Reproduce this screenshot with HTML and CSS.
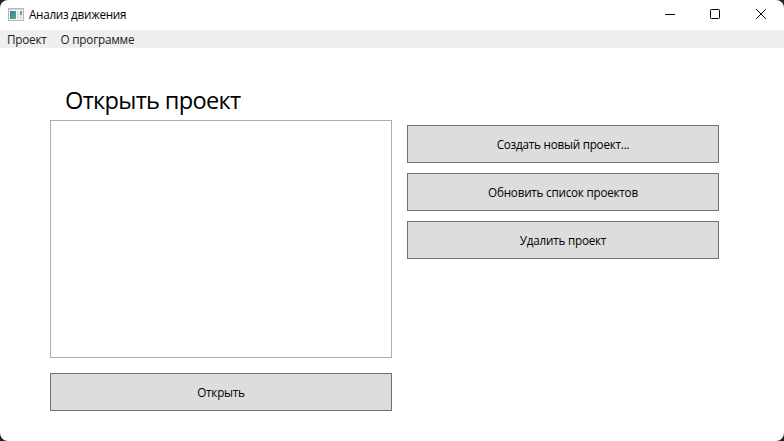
FILE: index.html
```html
<!DOCTYPE html>
<html lang="ru">
<head>
<meta charset="utf-8">
<title>Анализ движения</title>
<link rel="stylesheet" href="styles.css">
</head>
<body>
<div class="window">
  <header class="titlebar">
    <svg class="app-icon" width="16" height="13" viewBox="0 0 16 13">
      <defs>
        <linearGradient id="screen" x1="0" y1="0" x2="1" y2="1">
          <stop offset="0" stop-color="#3c78b4"/>
          <stop offset="1" stop-color="#4fae83"/>
        </linearGradient>
      </defs>
      <rect x=".5" y=".5" width="15" height="12" fill="#f2f3f4" stroke="#b3b7be"/>
      <rect x="1" y="1" width="14" height="1" fill="#d4d7dc"/>
      <rect x="2" y="3" width="6" height="8" fill="url(#screen)"/>
      <rect x="9" y="3" width="2" height="8" fill="#e2e3e5"/>
      <rect x="12" y="3" width="2" height="4" fill="#6ba889"/>
      <rect x="12" y="7" width="2" height="4" fill="#dfe2e2"/>
    </svg>
    <h1 class="title">Анализ движения</h1>
    <div class="controls">
      <svg width="10" height="10" viewBox="0 0 10 10"><path d="M0 5.5H10"/></svg>
      <svg width="10" height="10" viewBox="0 0 10 10"><rect x=".5" y=".5" width="9" height="9" rx=".8"/></svg>
      <svg class="close" width="10" height="10" viewBox="0 0 10 10"><path d="M.2 .2L9.8 9.8M9.8 .2L.2 9.8"/></svg>
    </div>
  </header>
  <nav class="menu"><span class="menu-project">Проект</span><span class="menu-about">О программе</span></nav>
  <main class="content">
    <section class="projects">
      <h2 class="heading">Открыть проект</h2>
      <div class="list"></div>
      <button class="button open">Открыть</button>
    </section>
    <section class="actions">
      <button class="button create">Создать новый проект...</button>
      <button class="button refresh">Обновить список проектов</button>
      <button class="button delete">Удалить проект</button>
    </section>
  </main>
</div>
</body>
</html>
```
FILE: styles.css
```css
* { box-sizing: border-box; }
body {
  margin: 0;
  background: #242021;
  font-family: "Open Sans", "Noto Sans", sans-serif;
  font-size: 11.7px;
  color: #000;
}
.window {
  width: 784px;
  height: 441px;
  background: #fff;
  border-radius: 8px;
  overflow: hidden;
}
.titlebar {
  height: 30px;
  display: flex;
  align-items: center;
  padding: 0 18px 0 8px;
}
.app-icon { margin-top: -2px; }
.title {
  margin: -2px 0 0 5px;
  font-size: 11.7px;
  font-weight: 400;
  line-height: 16px;
  letter-spacing: -0.28px;
}
.controls {
  display: flex;
  gap: 35px;
  margin: -2px 0 0 auto;
}
.controls svg { fill: none; stroke: #000; stroke-width: 1; }
.controls .close { margin-left: 1px; }
.menu {
  height: 18px;
  background: #efefef;
  display: flex;
  gap: 14px;
  padding-left: 7px;
  line-height: 18px;
  color: #212121;
  letter-spacing: -0.2px;
}
.content {
  display: flex;
  gap: 15px;
  padding: 36px 50px 0;
}
.projects { width: 342px; }
.heading {
  margin: 0;
  height: 36px;
  padding-left: 15px;
  font-size: 23.6px;
  font-weight: 400;
  line-height: 32px;
  letter-spacing: -0.7px;
  white-space: nowrap;
}
.list {
  height: 238px;
  border: 1px solid #abadb3;
}
.button {
  display: block;
  width: 100%;
  height: 38px;
  padding: 0 0 1px;
  border: 1px solid #707070;
  border-radius: 0;
  background: #ddd;
  font: inherit;
  color: #000;
  letter-spacing: -0.23px;
}
.open { margin-top: 15px; }
.actions {
  width: 312px;
  display: flex;
  flex-direction: column;
  gap: 10px;
  padding-top: 41px;
}
```
